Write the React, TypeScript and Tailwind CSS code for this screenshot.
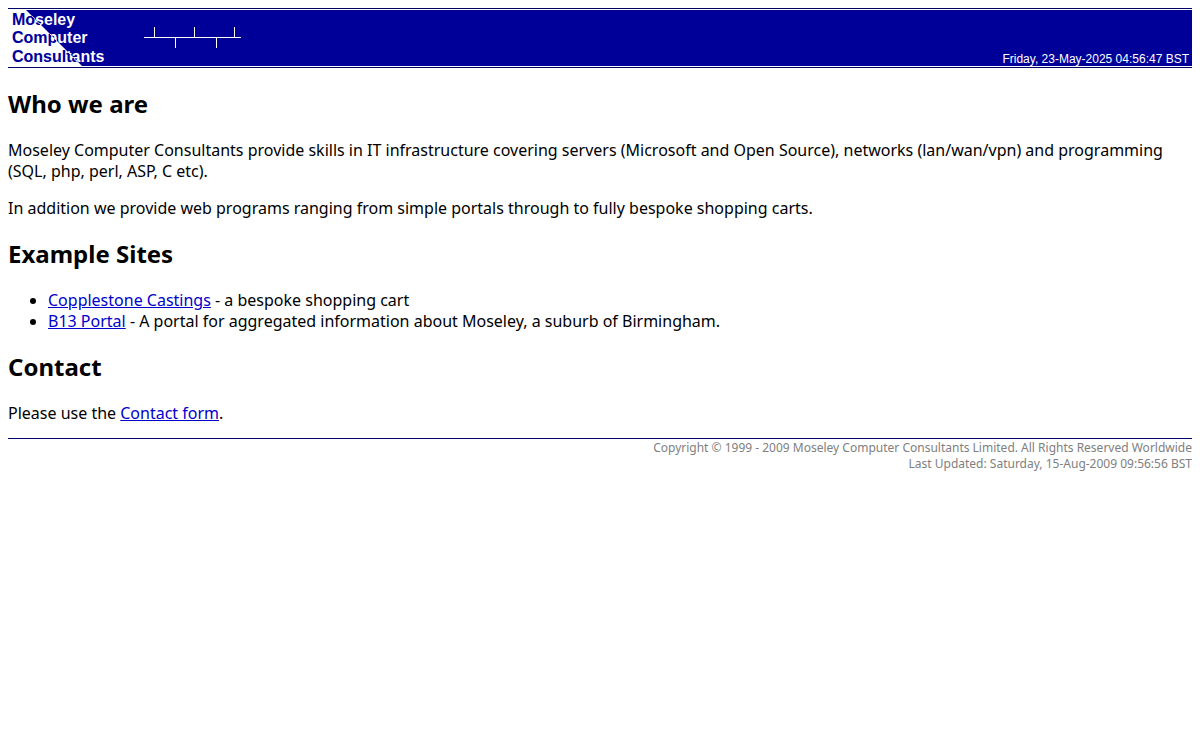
import type { ReactNode } from 'react';

const exampleSites = [
  { name: 'Copplestone Castings', description: ' - a bespoke shopping cart' },
  { name: 'B13 Portal', description: ' - A portal for aggregated information about Moseley, a suburb of Birmingham.' },
];

const Logo: React.FC = () => (
  <svg width="240" height="56" viewBox="0 0 240 56" role="img" aria-label="Moseley Computer Consultants">
    <defs>
      {/* hard colour change along the diagonal edge of the white area */}
      <linearGradient id="logo-text" gradientUnits="userSpaceOnUse" x1="36" y1="38" x2="56" y2="18">
        <stop offset="0.5" stopColor="#000099" />
        <stop offset="0.5" stopColor="#ffffff" />
      </linearGradient>
    </defs>

    <path d="M0 0H18L74 56H0Z" fill="#fff" />

    <g fill="url(#logo-text)" fontFamily="'Liberation Sans', Arial, sans-serif" fontSize="16" fontWeight="700">
      <text x="4" y="15">Moseley</text>
      <text x="4" y="33">Computer</text>
      <text x="4" y="52">Consultants</text>
    </g>

    <path
      d="M136 27.5H233M146.5 17V27M186.5 17V27M226.5 17V27M167.5 28V38M208.5 28V38"
      fill="none" stroke="#fff"
    />
  </svg>
);

const Heading: React.FC<{ children: ReactNode }> = ({ children }) => (
  <h2 className="mb-[21px] text-2xl leading-[31px] font-bold">{children}</h2>
);

const TextLink: React.FC<{ children: ReactNode }> = ({ children }) => (
  <a href="#" className="text-[#0000cc] underline">{children}</a>
);

export default function App() {
  return (
    <div className="p-2 font-['Noto_Sans','Open_Sans',sans-serif] text-base leading-[21px] text-black">
      <header className="border-y border-[#000066] py-px">
        <div className="flex items-end justify-between bg-[#000099]">
          <Logo />
          <p className="pr-[3px] font-['Liberation_Sans',Arial,sans-serif] text-xs leading-[14px] text-white">
            Friday, 23-May-2025 04:56:47 BST
          </p>
        </div>
      </header>

      <main className="pt-5 pb-[14px]">
        <section className="mb-[19px]">
          <Heading>Who we are</Heading>
          <p className="mb-4">
            Moseley Computer Consultants provide skills in IT infrastructure covering servers (Microsoft and Open
            Source), networks (lan/wan/vpn) and programming (SQL, php, perl, ASP, C etc).
          </p>
          <p>In addition we provide web programs ranging from simple portals through to fully bespoke shopping carts.</p>
        </section>

        <section className="mb-[19px]">
          <Heading>Example Sites</Heading>
          <ul className="list-disc pl-10">
            {exampleSites.map((site) => (
              <li key={site.name}>
                <TextLink>{site.name}</TextLink>
                {site.description}
              </li>
            ))}
          </ul>
        </section>

        <section>
          <Heading>Contact</Heading>
          <p>Please use the <TextLink>Contact form</TextLink>.</p>
        </section>
      </main>

      <footer className="border-t border-[#000066] pt-px text-right text-xs leading-4 text-[#808080]">
        <p>Copyright © 1999 - 2009 Moseley Computer Consultants Limited. All Rights Reserved Worldwide</p>
        <p>Last Updated: Saturday, 15-Aug-2009 09:56:56 BST</p>
      </footer>
    </div>
  );
}
